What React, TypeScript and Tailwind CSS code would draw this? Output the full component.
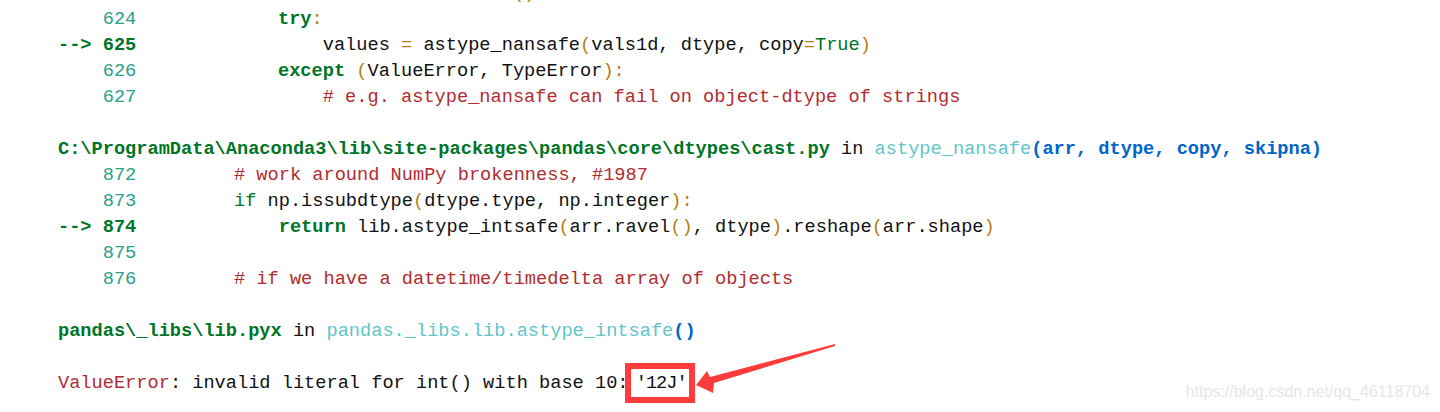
import React from 'react'

const G = 'text-[#007427]'
const NUM = 'text-[#2aa08a]'
const Y = 'text-[#b27d12]'
const R = 'text-[#b22b31]'
const C = 'text-[#60c6c8]'
const B = 'text-[#0065ca] font-bold'

type RowProps = { no?: string; cur?: boolean; w: string; children?: React.ReactNode }

const Row = ({ no, cur, w, children }: RowProps) => (
  <div className="flex h-[26px] items-center whitespace-pre">
    <span className={w}>
      {cur ? (
        <span className={`${G} font-bold`}>{'--> ' + no}</span>
      ) : (
        <span className={NUM}>{'    ' + (no ?? '')}</span>
      )}
    </span>
    <span>{children}</span>
  </div>
)

const Line = ({ children }: { children?: React.ReactNode }) => (
  <div className="h-[26px] flex items-center whitespace-pre">{children}</div>
)

export default function App() {
  return (
    <div className="relative w-[1440px] h-[412px] overflow-hidden bg-white text-[#111]">
      <div className="-mt-[20px] pl-[58px] font-['Liberation_Mono',monospace] text-[18.65px] leading-[26px]">
        <Line>
          <span className="pl-[455px] text-[#b27d12]">()</span>
        </Line>
        <Row no="624" w="w-[220px]">
          <span className={`${G} font-bold`}>try</span>
          <span className={Y}>:</span>
        </Row>
        <Row no="625" cur w="w-[220px]">
          {'    values '}
          <span className={Y}>=</span> astype_nansafe<span className={Y}>(</span>vals1d, dtype, copy
          <span className={Y}>=</span>
          <span className={G}>True</span>
          <span className={Y}>)</span>
        </Row>
        <Row no="626" w="w-[220px]">
          <span className={`${G} font-bold`}>except</span> <span className={Y}>(</span>ValueError, TypeError
          <span className={Y}>):</span>
        </Row>
        <Row no="627" w="w-[220px]">
          <span className={R}>{'    # e.g. astype_nansafe can fail on object-dtype of strings'}</span>
        </Row>
        <Line />
        <Line>
          <span className={`${G} font-bold`}>C:\ProgramData\Anaconda3\lib\site-packages\pandas\core\dtypes\cast.py</span>
          {' in '}
          <span className={C}>astype_nansafe</span>
          <span className={B}>(arr, dtype, copy, skipna)</span>
        </Line>
        <Row no="872" w="w-[176px]">
          <span className={R}># work around NumPy brokenness, #1987</span>
        </Row>
        <Row no="873" w="w-[176px]">
          <span className={G}>if</span> np.issubdtype<span className={Y}>(</span>dtype.type, np.integer
          <span className={Y}>):</span>
        </Row>
        <Row no="874" cur w="w-[176px]">
          {'    '}
          <span className={`${G} font-bold`}>return</span> lib.astype_intsafe<span className={Y}>(</span>arr.ravel
          <span className={Y}>()</span>, dtype<span className={Y}>)</span>.reshape<span className={Y}>(</span>arr.shape
          <span className={Y}>)</span>
        </Row>
        <Row no="875" w="w-[176px]" />
        <Row no="876" w="w-[176px]">
          <span className={R}># if we have a datetime/timedelta array of objects</span>
        </Row>
        <Line />
        <Line>
          <span className={`${G} font-bold`}>pandas\_libs\lib.pyx</span>
          {' in '}
          <span className={C}>pandas._libs.lib.astype_intsafe</span>
          <span className={B}>()</span>
        </Line>
        <Line />
        <Line>
          <span className={R}>ValueError</span>
          {': invalid literal for int() with base 10: '}
          <span className="-ml-[4px] tracking-[-1px]">'12J'</span>
        </Line>
      </div>

      {/* annotation: red box + arrow */}
      <div className="absolute left-[625px] top-[363px] w-[70px] h-[40px] border-[6px] border-[#ff3b3b]" />
      <svg className="absolute left-0 top-0 pointer-events-none" width="1440" height="412">
        <polygon
          points="696,385 707,371 710,377 835,344 835,346 714,383 713,393"
          fill="#ff3b3b"
        />
      </svg>

      <div className="absolute right-[10px] bottom-[8px] font-['Liberation_Sans',Arial,sans-serif] text-[16px] text-[#e6e6e6]">
        https://blog.csdn.net/qq_46118704
      </div>
    </div>
  )
}
